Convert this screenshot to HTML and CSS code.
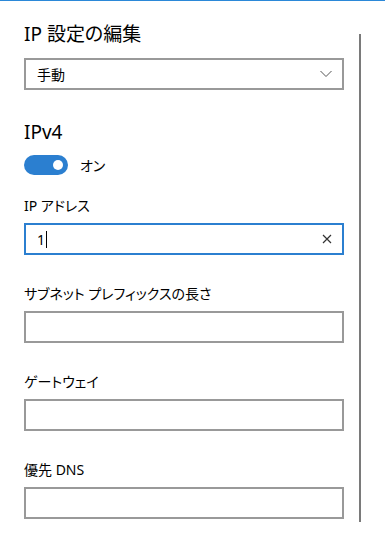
FILE: index.html
```html
<!DOCTYPE html>
<html lang="ja">
<head>
    <meta charset="UTF-8">
    <meta name="viewport" content="width=device-width, initial-scale=1.0">
    <title>IP 設定の編集</title>
    <link rel="stylesheet" href="styles.css">
</head>
<body>
    <div class="accent-line"></div>
    <div class="page">
        <div class="panel">
            <h1 class="title">IP 設定の編集</h1>
            <div class="select">
                <span>手動</span>
                <svg class="chevron" width="12" height="8" viewBox="0 0 12 8">
                    <path d="M0.5 1 L6 6.5 L11.5 1" fill="none" stroke="#555" stroke-width="1"/>
                </svg>
            </div>

            <h2 class="section">IPv4</h2>
            <div class="switch-row">
                <span class="switch"><span class="knob"></span></span>
                <span class="switch-text">オン</span>
            </div>

            <div class="field">
                <label class="field-label">IP アドレス</label>
                <div class="text-box focused">
                    <span class="value">1</span><span class="caret"></span>
                    <svg class="clear" width="10" height="10" viewBox="0 0 10 10">
                        <path d="M1 1 L9 9 M9 1 L1 9" stroke="#333" stroke-width="1.2"/>
                    </svg>
                </div>
            </div>

            <div class="field">
                <label class="field-label">サブネット プレフィックスの長さ</label>
                <div class="text-box"></div>
            </div>

            <div class="field">
                <label class="field-label">ゲートウェイ</label>
                <div class="text-box"></div>
            </div>

            <div class="field">
                <label class="field-label">優先 DNS</label>
                <div class="text-box"></div>
            </div>
        </div>
        <div class="scrollbar"></div>
    </div>
</body>
</html>
```

FILE: styles.css
```css
body {
    margin: 0;
    background: #fff;
    color: #000;
    font-family: "Noto Sans", "Noto Sans CJK JP", sans-serif;
    font-feature-settings: "palt";
    overflow: hidden;
}

.accent-line {
    height: 1px;
    background: #2b88d8;
}

.page {
    display: flex;
    padding-left: 24px;
}

.panel {
    width: 320px;
}

.title {
    margin: 20px 0 0;
    font-size: 19px;
    font-weight: normal;
    line-height: 26px;
}

.select {
    margin-top: 11px;
    height: 32px;
    box-sizing: border-box;
    border: 2px solid #999;
    display: flex;
    align-items: center;
    justify-content: space-between;
    padding: 0 10px 0 11px;
    font-size: 14px;
}

.section {
    margin: 29px 0 0;
    font-size: 19px;
    font-weight: normal;
    line-height: 26px;
}

.switch-row {
    margin-top: 10px;
    display: flex;
    align-items: center;
    gap: 12px;
    font-size: 14px;
}

.switch {
    width: 44px;
    height: 20px;
    border-radius: 10px;
    background: #2b7fd0;
    display: flex;
    align-items: center;
    justify-content: flex-end;
    padding-right: 5px;
    box-sizing: border-box;
}

.knob {
    width: 10px;
    height: 10px;
    border-radius: 50%;
    background: #fff;
}

.field {
    margin-top: 29px;
}

.switch-row + .field {
    margin-top: 21px;
}

.field-label {
    display: block;
    font-size: 14px;
    line-height: 20px;
    margin-bottom: 7px;
}

.text-box {
    height: 32px;
    box-sizing: border-box;
    border: 2px solid #999;
    display: flex;
    align-items: center;
    padding: 0 11px;
    font-size: 14px;
}

.text-box.focused {
    border-color: #2b7fd0;
}

.caret {
    width: 1px;
    height: 17px;
    background: #000;
    margin-left: 1px;
}

.clear {
    margin-left: auto;
    margin-right: -1px;
}

.scrollbar {
    width: 2px;
    height: 488px;
    margin-top: 33px;
    margin-left: 15px;
    background: #7a7a7a;
}
```
